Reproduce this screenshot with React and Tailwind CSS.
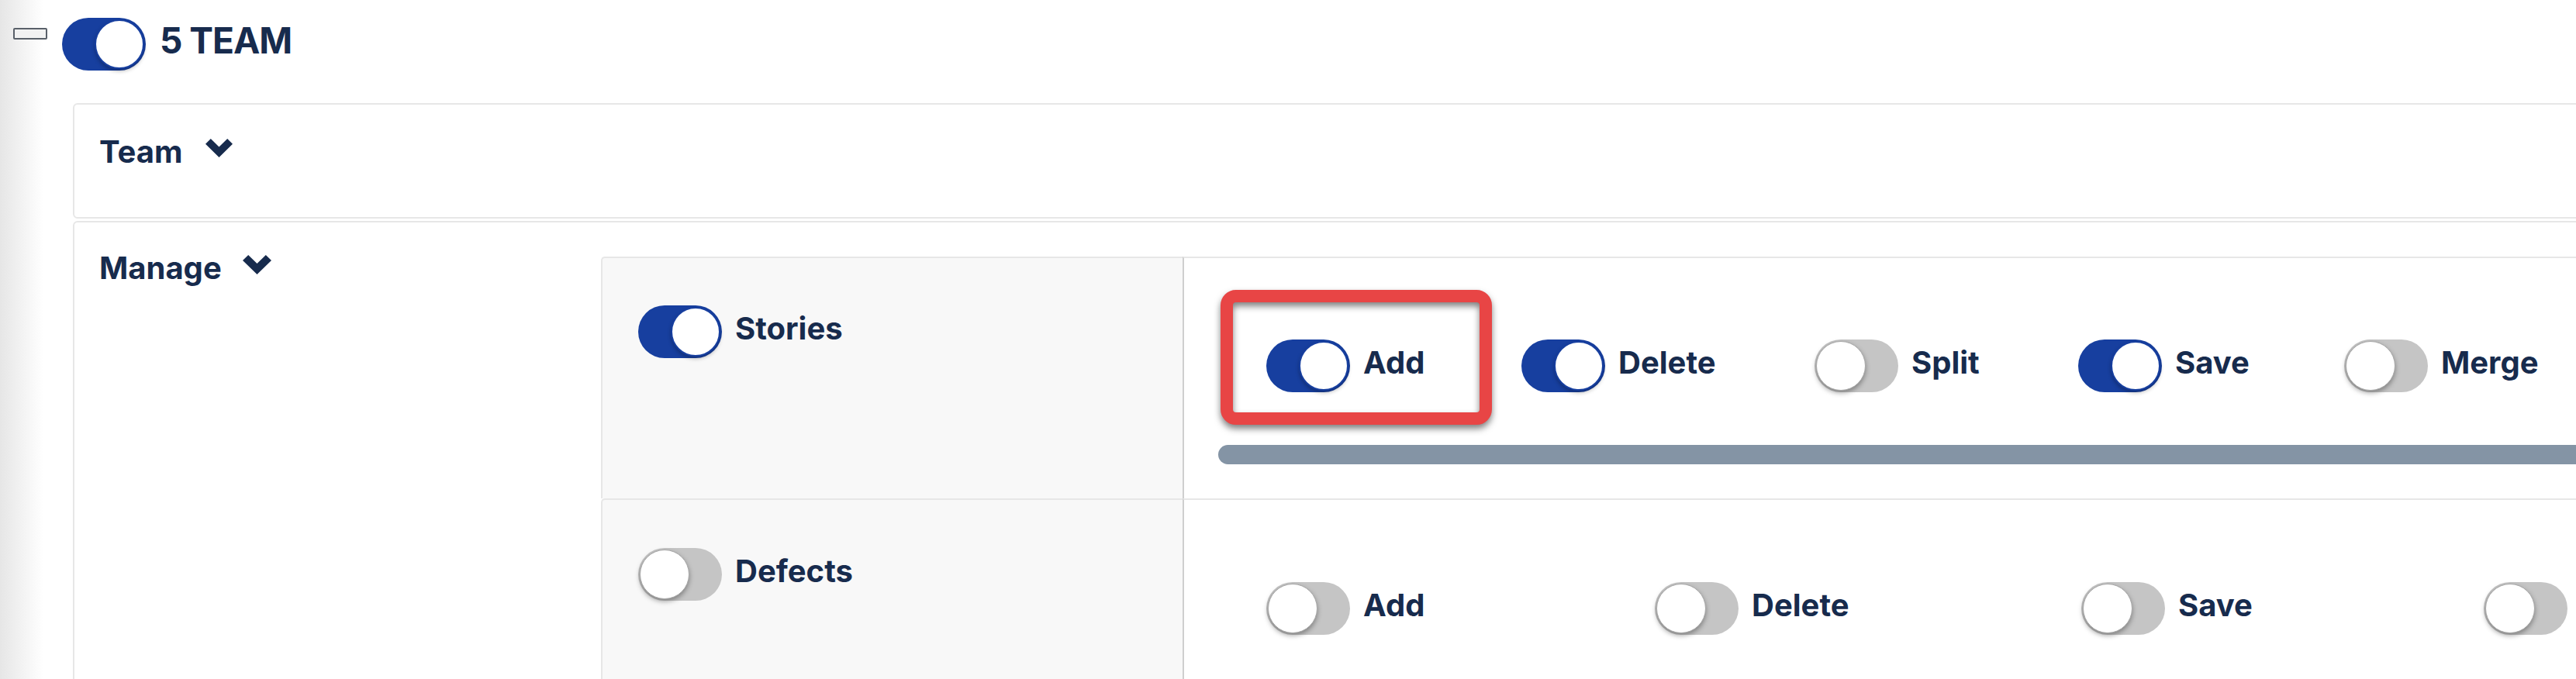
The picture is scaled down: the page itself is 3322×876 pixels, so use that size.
import React from "react";

function Toggle({ on }) {
  if (on) {
    return (
      <div className="flex h-[68px] w-[108px] shrink-0 items-center justify-end rounded-full bg-[#173f9f] p-[2px]">
        <div className="h-[64px] w-[64px] rounded-full border-2 border-[#173f9f] bg-white shadow-[0_3px_5px_rgba(0,0,0,0.25)]" />
      </div>
    );
  }
  return (
    <div className="flex h-[68px] w-[108px] shrink-0 items-center justify-start rounded-full bg-[#c5c5c5] p-[2px]">
      <div className="h-[64px] w-[64px] rounded-full border-[1.5px] border-[#a9a9a9] bg-white shadow-[0_3px_6px_rgba(0,0,0,0.35)]" />
    </div>
  );
}

function Item({ on, label, w = "" }) {
  return (
    <div className={"flex shrink-0 items-start " + w}>
      <Toggle on={on} />
      {label ? (
        <span className="ml-[17px] mt-[15px] whitespace-nowrap text-[40px] leading-[30px]">{label}</span>
      ) : null}
    </div>
  );
}

function Chevron({ className }) {
  return (
    <svg viewBox="0 0 36 25" preserveAspectRatio="none" className={className} fill="#172b4d">
      <polygon points="0,7 7,0 18,11 29,0 36,7 18,25" />
    </svg>
  );
}

export default function App() {
  return (
    <div className="h-[876px] w-[3322px] overflow-hidden bg-[linear-gradient(to_right,#e6e6e6_0px,#ffffff_56px)] [font-family:Inter,'Noto_Sans',sans-serif] font-bold text-[#172b4d]">
      {/* Header */}
      <div className="flex items-start pl-[17px] pt-[23px]">
        <div className="mt-[13px] h-[15px] w-[44px] rounded-[2px] border-2 border-[#596069] bg-[#f2f2f2]" />
        <div className="ml-[19px]">
          <Toggle on />
        </div>
        <span className="ml-[18px] mt-[12px] whitespace-nowrap text-[46px] leading-[35px] tracking-[-1px]">5 TEAM</span>
      </div>

      {/* Team card */}
      <div className="ml-[94px] mt-[42px] h-[149px] w-[3400px] rounded-[6px] border-2 border-[#e7e7e7] bg-white pl-[32px] pt-[46px]">
        <div className="flex items-start">
          <span className="text-[40px] leading-[30px]">Team</span>
          <Chevron className="ml-[29px] -mt-[2px] h-[24px] w-[35px]" />
        </div>
      </div>

      {/* Manage card */}
      <div className="ml-[94px] mt-[3px] flex h-[700px] w-[3400px] rounded-[6px] border-2 border-[#e7e7e7] bg-white pt-[44px]">
        <div className="w-[679px] shrink-0 pl-[32px]">
          <div className="flex items-start">
            <span className="text-[40px] leading-[30px]">Manage</span>
            <Chevron className="ml-[27px] -mt-[2px] h-[25px] w-[37px]" />
          </div>
        </div>

        <div className="flex min-w-0 flex-1 flex-col">
          {/* Row 1 */}
          <div className="flex h-[312px] shrink-0">
            <div className="w-[750px] shrink-0 rounded-tl-[5px] border-l-2 border-t-2 border-[#e7e7e7] bg-[#f8f8f8] pl-[46px] pt-[61px]">
              <Item on label="Stories" />
            </div>
            <div className="relative min-w-0 flex-1 border-l-2 border-t-2 border-l-[#cfcfcf] border-t-[#e7e7e7] bg-white pl-[44px] pt-[105px]">
              <div className="flex pl-[62px]">
                <Item on label="Add" w="w-[329px]" />
                <Item on label="Delete" w="w-[378px]" />
                <Item label="Split" w="w-[340px]" />
                <Item on label="Save" w="w-[343px]" />
                <Item label="Merge" />
              </div>
              <div className="mt-[68px] h-[25px] rounded-l-full bg-[#8494a5]" />
              <div className="pointer-events-none absolute left-[47px] top-[41px] h-[174px] w-[350px] rounded-[20px] border-[16px] border-[#e84545] [filter:drop-shadow(0_5px_4px_rgba(0,0,0,0.5))]" />
            </div>
          </div>

          {/* Row 2 */}
          <div className="flex flex-1">
            <div className="w-[750px] shrink-0 rounded-tl-[5px] border-l-2 border-t-2 border-[#e7e7e7] bg-[#f8f8f8] pl-[46px] pt-[62px]">
              <Item label="Defects" />
            </div>
            <div className="min-w-0 flex-1 border-l-2 border-t-2 border-l-[#cfcfcf] border-t-[#e7e7e7] bg-white pl-[106px] pt-[106px]">
              <div className="flex">
                <Item label="Add" w="w-[501px]" />
                <Item label="Delete" w="w-[550px]" />
                <Item label="Save" w="w-[519px]" />
                <Item />
              </div>
            </div>
          </div>
        </div>
      </div>
    </div>
  );
}
